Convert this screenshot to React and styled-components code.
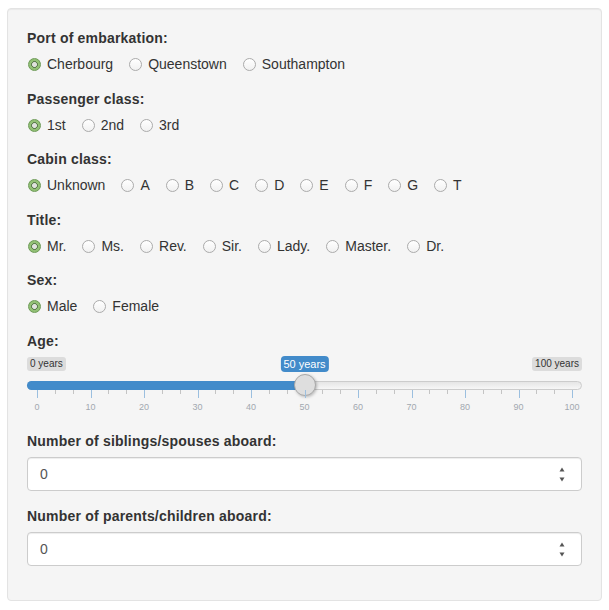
import React from "react";
import styled, { createGlobalStyle } from "styled-components";

const Global = createGlobalStyle`
  html, body { margin: 0; padding: 0; background: #fff; }
  body {
    font-family: "Liberation Sans", Arial, Helvetica, sans-serif;
    font-size: 14px;
    line-height: 20px;
    color: #333;
  }
  * { box-sizing: border-box; }
`;

const Page = styled.div`
  padding: 8px 7px 10px 7px;
`;

const Well = styled.div`
  background: #f5f5f5;
  border: 1px solid #e3e3e3;
  border-radius: 4px;
  box-shadow: inset 0 1px 1px rgba(0, 0, 0, 0.05);
  padding: 19px;
  min-height: 592px;
`;

const Group = styled.div`
  margin-bottom: 15px;
`;

const Label = styled.div`
  font-weight: bold;
  line-height: 20px;
  letter-spacing: 0.2px;
  margin-bottom: ${(p) => p.$gap || "5px"};
`;

const Options = styled.div`
  display: flex;
  align-items: center;
  gap: 15px;
  padding-top: 1.5px;
  height: 20.5px;
`;

const Option = styled.label`
  display: flex;
  align-items: center;
  cursor: pointer;
`;

const Radio = styled.span`
  width: 13px;
  height: 13px;
  border-radius: 50%;
  margin: 1px 6px 0 1px;
  flex: none;
  border: 1px solid ${(p) => (p.$on ? "#6c9a55" : "#ababab")};
  background: ${(p) =>
    p.$on
      ? "radial-gradient(circle, #dfe2dd 0 2.2px, #5f7f50 2.4px 3.2px, #92c075 3.4px)"
      : "linear-gradient(#ffffff, #f1f1f1)"};
`;

const Slider = styled.div`
  position: relative;
  padding-top: 1px;
  padding-bottom: 6.5px;
`;

const EdgeRow = styled.div`
  display: flex;
  justify-content: space-between;
  height: 14px;
`;

const EdgeTag = styled.span`
  font-size: 10px;
  line-height: 12px;
  padding: 1px 3px;
  background: #dcdcdc;
  border-radius: 3px;
  color: #333;
`;

const ValueTag = styled.span`
  position: absolute;
  top: 0.5px;
  transform: translateX(-50%);
  font-size: 11px;
  line-height: 14px;
  padding: 1px 3px;
  background: #428bca;
  color: #fff;
  border-radius: 4px;
  white-space: nowrap;
`;

const Track = styled.div`
  position: relative;
  margin-top: 10px;
  height: 9px;
  border: 1px solid #cccccc;
  border-radius: 5px;
  background: linear-gradient(to bottom, #dddddd -50%, #ffffff 150%);
`;

const Fill = styled.div`
  position: absolute;
  top: -1px;
  bottom: -1px;
  left: -1px;
  background: #428bca;
  border-radius: 5px 0 0 5px;
`;

const Handle = styled.div`
  position: absolute;
  top: -8px;
  width: 22px;
  height: 22px;
  margin-left: -11px;
  border-radius: 50%;
  background: #dedede;
  border: 1px solid #a9a9a9;
  box-shadow: 1px 1px 3px rgba(0, 0, 0, 0.25);
`;

const Grid = styled.div`
  position: relative;
  height: 20px;
`;

const Tick = styled.span`
  position: absolute;
  top: 0;
  width: 1px;
  height: ${(p) => (p.$major ? "8px" : "4px")};
  background: ${(p) => (p.$major ? "#9bbfdf" : "#c4c4c4")};
`;

const TickText = styled.span`
  position: absolute;
  top: 10px;
  transform: translateX(-50%);
  font-size: 9px;
  line-height: 14px;
  color: #a2a8b0;
  white-space: nowrap;
`;

const Field = styled.div`
  display: flex;
  align-items: center;
  justify-content: space-between;
  height: 34px;
  padding: 6px 16px 6px 12px;
  background: #fff;
  border: 1px solid #cccccc;
  border-radius: 4px;
  box-shadow: inset 0 1px 1px rgba(0, 0, 0, 0.075);
  color: #555;
  font-size: 14px;
`;

const Spinner = styled.svg`
  width: 6px;
  height: 15px;
  display: block;
`;

const pos = (f) => `calc(10px + (100% - 20px) * ${f})`;

function RadioGroup({ label, options, selected }) {
  return (
    <Group>
      <Label>{label}</Label>
      <Options role="radiogroup">
        {options.map((o) => (
          <Option key={o}>
            <Radio $on={o === selected} role="radio" aria-checked={o === selected} />
            <span>{o}</span>
          </Option>
        ))}
      </Options>
    </Group>
  );
}

function AgeSlider({ min, max, value }) {
  const f = (value - min) / (max - min);
  const ticks = [];
  for (let i = 0; i <= 30; i++) {
    ticks.push(<Tick key={i} $major={i % 3 === 0} style={{ left: pos(i / 30) }} />);
  }
  const texts = [];
  for (let v = min; v <= max; v += 10) {
    texts.push(
      <TickText key={v} style={{ left: pos((v - min) / (max - min)) }}>
        {v}
      </TickText>
    );
  }
  return (
    <Slider>
      <EdgeRow>
        <EdgeTag>{min} years</EdgeTag>
        <EdgeTag>{max} years</EdgeTag>
      </EdgeRow>
      <ValueTag style={{ left: pos(f) }}>{value} years</ValueTag>
      <Track>
        <Fill style={{ width: `calc(11px + (100% - 18px) * ${f})` }} />
        <Handle style={{ left: `calc(9px + (100% - 18px) * ${f})` }} />
      </Track>
      <Grid>
        {ticks}
        {texts}
      </Grid>
    </Slider>
  );
}

function NumberField({ label, value }) {
  return (
    <Group>
      <Label $gap="6px">{label}</Label>
      <Field>
        <span>{value}</span>
        <Spinner viewBox="0 0 6 15">
          <path d="M3 0.5 L5.5 4.5 L0.5 4.5 Z" fill="#555" />
          <path d="M0.5 10.5 L5.5 10.5 L3 14.5 Z" fill="#555" />
        </Spinner>
      </Field>
    </Group>
  );
}

export default function App() {
  return (
    <Page>
      <Global />
      <Well>
        <RadioGroup
          label="Port of embarkation:"
          options={["Cherbourg", "Queenstown", "Southampton"]}
          selected="Cherbourg"
        />
        <RadioGroup label="Passenger class:" options={["1st", "2nd", "3rd"]} selected="1st" />
        <RadioGroup
          label="Cabin class:"
          options={["Unknown", "A", "B", "C", "D", "E", "F", "G", "T"]}
          selected="Unknown"
        />
        <RadioGroup
          label="Title:"
          options={["Mr.", "Ms.", "Rev.", "Sir.", "Lady.", "Master.", "Dr."]}
          selected="Mr."
        />
        <RadioGroup label="Sex:" options={["Male", "Female"]} selected="Male" />
        <Group>
          <Label>Age:</Label>
          <AgeSlider min={0} max={100} value={50} />
        </Group>
        <NumberField label="Number of siblings/spouses aboard:" value="0" />
        <NumberField label="Number of parents/children aboard:" value="0" />
      </Well>
    </Page>
  );
}
